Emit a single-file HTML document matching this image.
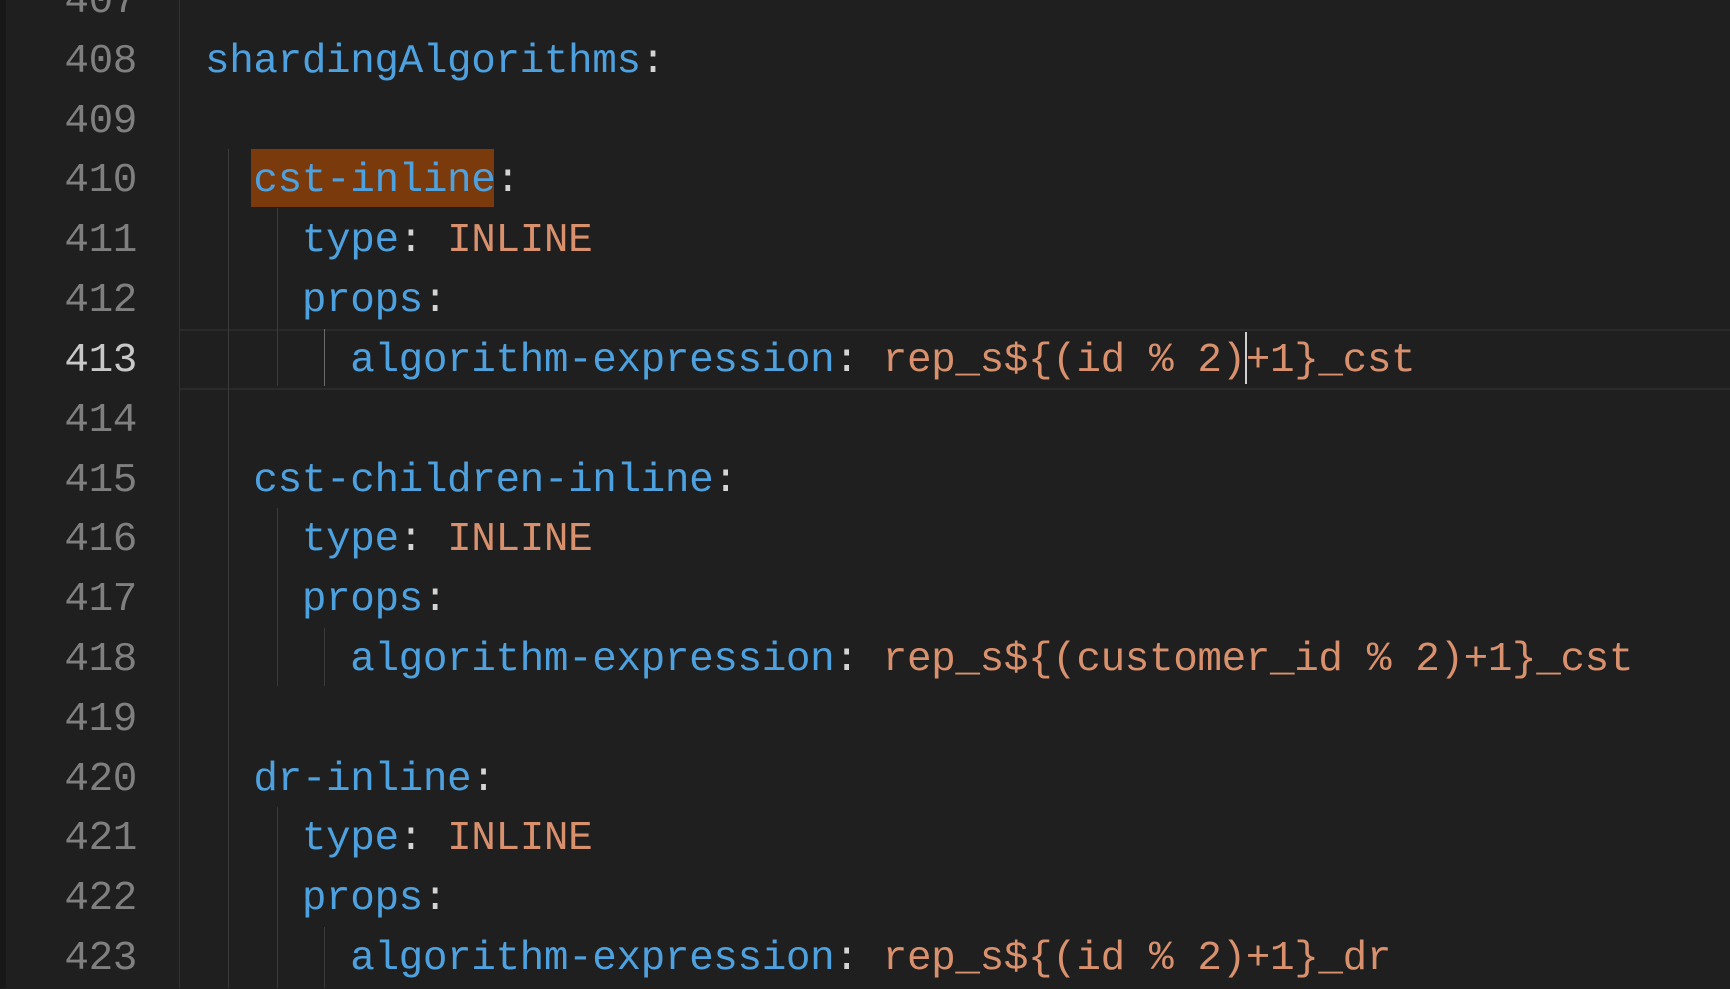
<!DOCTYPE html>
<html><head><meta charset="utf-8"><style>
html,body{margin:0;padding:0;width:1730px;height:988px;overflow:hidden;background:#1f1f1f}
.strip{position:absolute;left:0;top:0;width:6px;height:988px;background:#181818}
.gut{position:absolute;left:179px;top:0;width:1px;height:988px;background:#333}
.cur{position:absolute;left:180px;top:329px;width:1560px;height:57px;border-top:2px solid #2a2a2a;border-bottom:2px solid #2a2a2a}
.l{position:absolute;left:0;height:60px;line-height:60px;font-family:"Liberation Mono",monospace;font-size:41px;letter-spacing:-0.4px;white-space:pre;margin-top:3px}
.n{width:137px;text-align:right;color:#7f7f7f}
.n.a{color:#c8c8c8}
.c{left:205px;color:#d4d4d4}
.k{color:#4ea1df}
.s{color:#d9906d}
.g{position:absolute;width:1px;background:#3a3a3a}
.hl{position:absolute;left:251px;top:149px;width:243px;height:58px;background:#7a3a0c}
.caret{position:absolute;left:1245px;top:332px;width:2px;height:52px;background:#d0d0d0}
</style></head><body>
<div class="strip"></div>
<div class="gut"></div>
<div class="cur"></div>
<div class="hl"></div>
<div class="g" style="left:228px;top:149px;height:839px"></div>
<div class="g" style="left:277px;top:208px;height:178px"></div>
<div class="g" style="left:324px;top:329px;height:57px;background:#6a6a6a"></div>
<div class="g" style="left:277px;top:508px;height:178px"></div>
<div class="g" style="left:324px;top:628px;height:58px"></div>
<div class="g" style="left:277px;top:807px;height:181px"></div>
<div class="g" style="left:324px;top:927px;height:61px"></div>

<div class="l n" style="top:-31px">407</div>
<div class="l n" style="top:29px">408</div>
<div class="l n" style="top:89px">409</div>
<div class="l n" style="top:148px">410</div>
<div class="l n" style="top:208px">411</div>
<div class="l n" style="top:268px">412</div>
<div class="l n a" style="top:328px">413</div>
<div class="l n" style="top:388px">414</div>
<div class="l n" style="top:448px">415</div>
<div class="l n" style="top:507px">416</div>
<div class="l n" style="top:567px">417</div>
<div class="l n" style="top:627px">418</div>
<div class="l n" style="top:687px">419</div>
<div class="l n" style="top:747px">420</div>
<div class="l n" style="top:806px">421</div>
<div class="l n" style="top:866px">422</div>
<div class="l n" style="top:926px">423</div>

<div class="l c" style="top:29px"><span class="k">shardingAlgorithms</span>:</div>
<div class="l c" style="top:148px">  <span class="k">cst-inline</span>:</div>
<div class="l c" style="top:208px">    <span class="k">type</span>: <span class="s">INLINE</span></div>
<div class="l c" style="top:268px">    <span class="k">props</span>:</div>
<div class="l c" style="top:328px">      <span class="k">algorithm-expression</span>: <span class="s">rep_s${(id % 2)+1}_cst</span></div>
<div class="l c" style="top:448px">  <span class="k">cst-children-inline</span>:</div>
<div class="l c" style="top:507px">    <span class="k">type</span>: <span class="s">INLINE</span></div>
<div class="l c" style="top:567px">    <span class="k">props</span>:</div>
<div class="l c" style="top:627px">      <span class="k">algorithm-expression</span>: <span class="s">rep_s${(customer_id % 2)+1}_cst</span></div>
<div class="l c" style="top:747px">  <span class="k">dr-inline</span>:</div>
<div class="l c" style="top:806px">    <span class="k">type</span>: <span class="s">INLINE</span></div>
<div class="l c" style="top:866px">    <span class="k">props</span>:</div>
<div class="l c" style="top:926px">      <span class="k">algorithm-expression</span>: <span class="s">rep_s${(id % 2)+1}_dr</span></div>
<div class="caret"></div>
</body></html>
